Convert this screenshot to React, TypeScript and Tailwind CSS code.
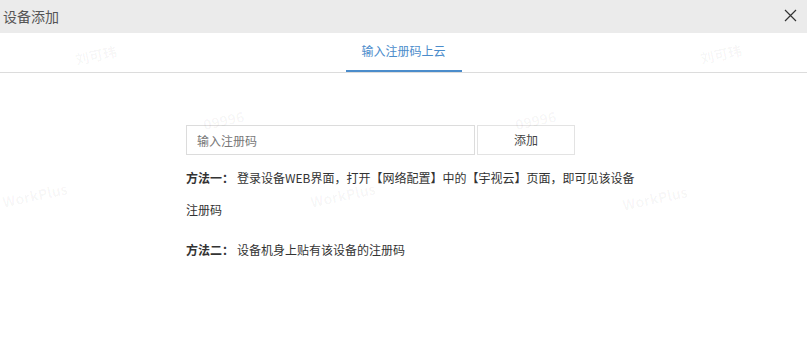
import React, { useState } from "react";

const font = { fontFamily: '"Microsoft YaHei", "Noto Sans CJK SC", sans-serif' };

function Watermark({ text, className }: { text: string; className: string }) {
  return (
    <span
      className={`pointer-events-none absolute -rotate-12 select-none text-[14px] font-bold text-[#000]/[0.04] ${className}`}
    >
      {text}
    </span>
  );
}

export default function App() {
  const [code, setCode] = useState("");
  return (
    <div className="relative h-[359px] w-[807px] overflow-hidden bg-white" style={font}>
      <div className="flex h-[33px] items-center justify-between bg-[#ebebeb] pl-[3px] pr-[10px]">
        <span className="text-[14px] text-[#555]">设备添加</span>
        <svg width="13" height="13" viewBox="0 0 13 13" className="mb-[3px]">
          <path d="M1 1 L12 12 M12 1 L1 12" stroke="#333" strokeWidth="1.2" fill="none" />
        </svg>
      </div>

      <div className="flex h-[40px] justify-center border-b border-[#dcdcdc]">
        <div className="flex w-[116px] items-center justify-center border-b-2 border-[#4b8ccb] pb-[2px] text-[12px] text-[#4b8ccb]">
          输入注册码上云
        </div>
      </div>

      <div className="ml-[186px] pt-[52px]">
        <form onSubmit={e => e.preventDefault()} className="flex gap-[2px]">
          <input
            value={code}
            onChange={e => setCode(e.target.value)}
            placeholder="输入注册码"
            className="h-[30px] w-[289px] border border-[#dcdcdc] px-[10px] text-[12px] text-[#333] outline-none placeholder:text-[#777]"
          />
          <button type="submit" className="h-[30px] w-[98px] border border-[#e3e3e3] bg-white text-[12px] text-[#444]">
            添加
          </button>
        </form>

        <div className="mt-[7px] w-[456px] text-[12px] leading-[32px] text-[#333]">
          <p>
            <b className="mr-[3px] font-bold">方法一：</b>登录设备WEB界面，打开【网络配置】中的【宇视云】页面，即可见该设备注册码
          </p>
          <p className="mt-[8px]">
            <b className="mr-[3px] font-bold">方法二：</b>设备机身上贴有该设备的注册码
          </p>
        </div>
      </div>

      <Watermark text="刘可玮" className="left-[75px] top-[45px]" />
      <Watermark text="刘可玮" className="left-[700px] top-[44px]" />
      <Watermark text="09996" className="left-[203px] top-[110px]" />
      <Watermark text="09996" className="left-[515px] top-[110px]" />
      <Watermark text="WorkPlus" className="left-[2px] top-[185px]" />
      <Watermark text="WorkPlus" className="left-[310px] top-[185px]" />
      <Watermark text="WorkPlus" className="left-[622px] top-[188px]" />
    </div>
  );
}
